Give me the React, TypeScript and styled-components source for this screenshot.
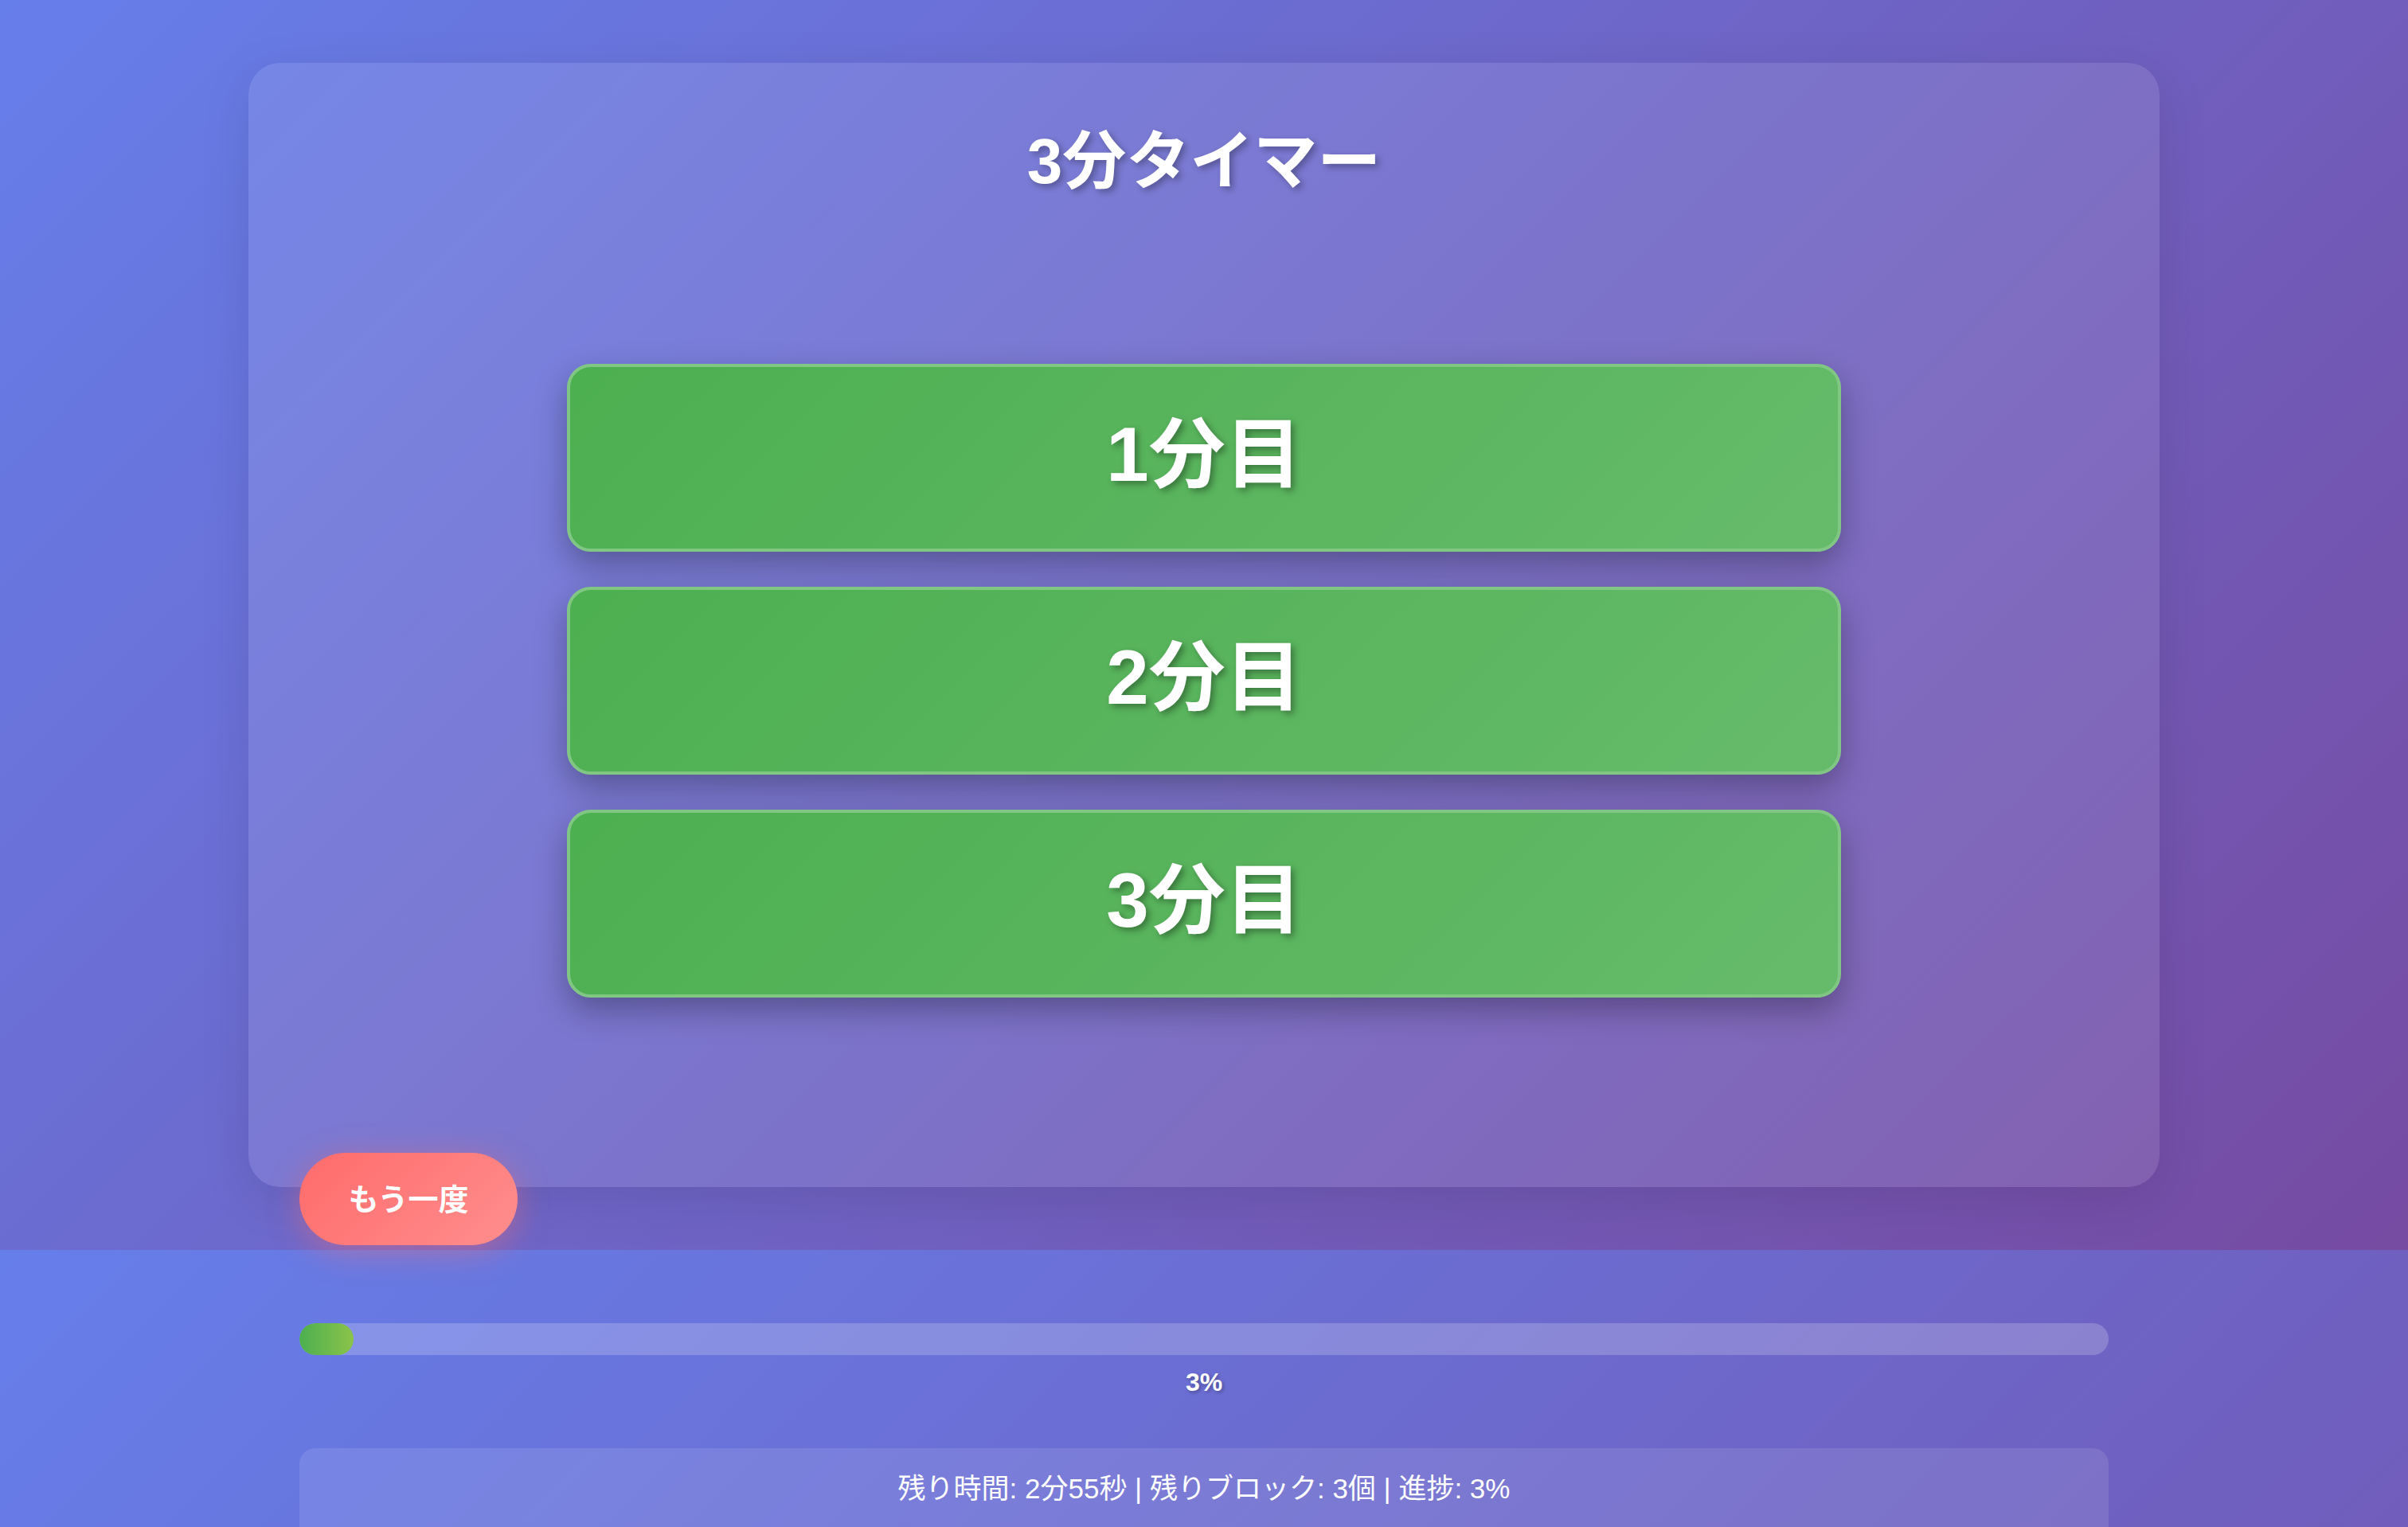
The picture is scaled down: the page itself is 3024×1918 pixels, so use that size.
import React from "react";
import styled, { createGlobalStyle } from "styled-components";

const GlobalStyle = createGlobalStyle`
  html, body {
    margin: 0;
    padding: 0;
    overflow: hidden;
    background: #6a5fc4;
  }
  body {
    font-family: "Liberation Sans", "Noto Sans CJK JP", Arial, sans-serif;
    color: #ffffff;
  }
  * { box-sizing: border-box; }
`;

const Page = styled.div`
  width: 3024px;
  height: 1918px;
  display: flex;
  flex-direction: column;
  overflow: hidden;
`;

const TopArea = styled.main`
  position: relative;
  height: 1570px;
  flex-shrink: 0;
  background: linear-gradient(135deg, #667eea 0%, #764ba2 100%);
  display: flex;
  flex-direction: column;
  align-items: center;
  padding-top: 79px;
`;

const Card = styled.section`
  width: 2400px;
  height: 1412px;
  border-radius: 40px;
  background: rgba(255, 255, 255, 0.1);
  box-shadow: 0 16px 64px rgba(0, 0, 0, 0.1);
  padding-top: 76px;
  display: flex;
  flex-direction: column;
  align-items: center;
`;

const Title = styled.h1`
  margin: 0 0 206px;
  font-size: 80px;
  line-height: 1.2;
  font-weight: 700;
  color: #ffffff;
  text-shadow: 4px 4px 8px rgba(0, 0, 0, 0.3);
`;

const BlockList = styled.div`
  display: flex;
  flex-direction: column;
  gap: 44px;
`;

const Block = styled.div`
  width: 1600px;
  height: 236px;
  border-radius: 30px;
  border: 4px solid #81c784;
  background: linear-gradient(135deg, #4caf50 0%, #66bb6a 100%);
  box-shadow: 0 16px 40px rgba(0, 0, 0, 0.3);
  display: flex;
  align-items: center;
  justify-content: center;
  padding-bottom: 8px;
  font-size: 96px;
  line-height: 1.2;
  font-weight: 700;
  color: #ffffff;
  text-shadow: 4px 4px 8px rgba(0, 0, 0, 0.35);
`;

const RestartButton = styled.button`
  position: absolute;
  left: 376px;
  top: 1448px;
  width: 274px;
  height: 116px;
  padding: 0 0 6px;
  border: none;
  border-radius: 58px;
  background: linear-gradient(135deg, #ff6b6b 0%, #ff8e8e 100%);
  box-shadow: 0 8px 40px rgba(255, 107, 107, 0.45);
  color: #ffffff;
  font-family: "Liberation Sans", "Noto Sans CJK JP", Arial, sans-serif;
  font-size: 38px;
  font-weight: 700;
  cursor: pointer;
`;

const BottomArea = styled.footer`
  flex: 1;
  overflow: hidden;
  background: linear-gradient(135deg, #667eea 0%, #764ba2 100%);
  background-size: 3024px 2190px;
  background-repeat: no-repeat;
  padding-top: 92px;
`;

const BottomInner = styled.div`
  width: 2272px;
  margin: 0 auto;
  display: flex;
  flex-direction: column;
  align-items: stretch;
`;

const Track = styled.div`
  height: 40px;
  border-radius: 20px;
  background: rgba(255, 255, 255, 0.2);
  overflow: hidden;
`;

const Fill = styled.div`
  height: 100%;
  border-radius: 20px;
  background: linear-gradient(90deg, #4caf50 0%, #8bc34a 100%);
`;

const Percent = styled.div`
  margin-top: 15px;
  text-align: center;
  font-size: 32px;
  line-height: 1.2;
  font-weight: 700;
  text-shadow: 2px 2px 4px rgba(0, 0, 0, 0.3);
`;

const InfoBox = styled.div`
  margin-top: 64px;
  height: 160px;
  border-radius: 20px;
  background: rgba(255, 255, 255, 0.1);
  padding-top: 26px;
  text-align: center;
  font-size: 35px;
  line-height: 1.4;
`;

const blocks = ["1分目", "2分目", "3分目"];
const progress = 3;

export default function App() {
  return (
    <>
      <GlobalStyle />
      <Page>
        <TopArea>
          <Card>
            <Title>3分タイマー</Title>
            <BlockList>
              {blocks.map((b) => (
                <Block key={b}>{b}</Block>
              ))}
            </BlockList>
          </Card>
          <RestartButton>もう一度</RestartButton>
        </TopArea>
        <BottomArea>
          <BottomInner>
            <Track>
              <Fill style={{ width: `${progress}%` }} />
            </Track>
            <Percent>{progress}%</Percent>
            <InfoBox>
              残り時間: 2分55秒 | 残りブロック: 3個 | 進捗: {progress}%
            </InfoBox>
          </BottomInner>
        </BottomArea>
      </Page>
    </>
  );
}
